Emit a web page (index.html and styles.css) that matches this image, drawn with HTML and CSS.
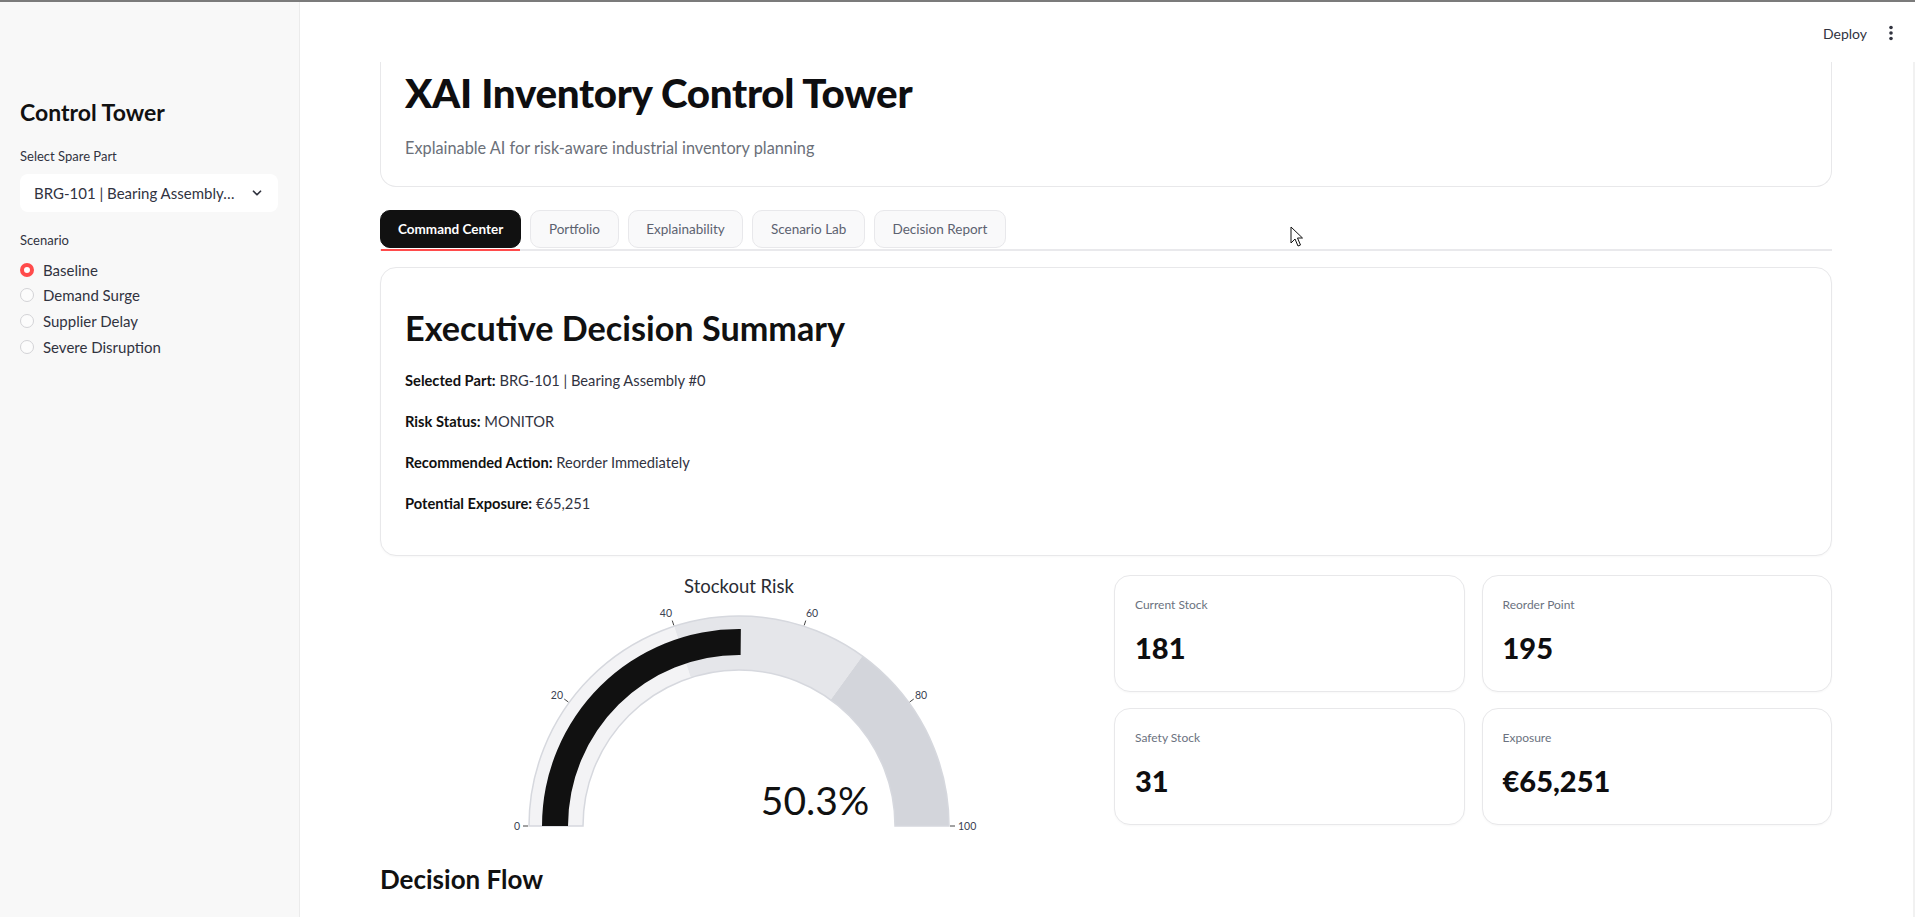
FILE: index.html
```html
<!DOCTYPE html>
<html lang="en">
<head>
<meta charset="utf-8">
<title>XAI Inventory Control Tower</title>
<link rel="stylesheet" href="styles.css">
</head>
<body>
<div class="topline"></div>
<div class="app">
  <aside class="sidebar">
    <h3 class="side-title">Control Tower</h3>
    <label class="field-label">Select Spare Part</label>
    <div class="select">
      <span class="select-value">BRG-101 | Bearing Assembly…</span>
      <svg class="chev" width="14" height="14" viewBox="0 0 24 24"><path d="M6 9l6 6 6-6" fill="none" stroke="#31333f" stroke-width="3" stroke-linecap="round" stroke-linejoin="round"/></svg>
    </div>
    <label class="field-label scenario-label">Scenario</label>
    <div class="radios">
      <div class="radio checked"><span class="dot"></span><span>Baseline</span></div>
      <div class="radio"><span class="dot"></span><span>Demand Surge</span></div>
      <div class="radio"><span class="dot"></span><span>Supplier Delay</span></div>
      <div class="radio"><span class="dot"></span><span>Severe Disruption</span></div>
    </div>
  </aside>

  <main class="main">
    <header class="appbar">
      <span class="deploy">Deploy</span>
      <svg class="kebab" width="6" height="16" viewBox="0 0 6 16"><circle cx="3" cy="2.5" r="1.8" fill="#31333f"/><circle cx="3" cy="8" r="1.8" fill="#31333f"/><circle cx="3" cy="13.5" r="1.8" fill="#31333f"/></svg>
    </header>

    <div class="content">
      <section class="hero">
        <h1 class="hero-title">XAI Inventory Control Tower</h1>
        <p class="hero-sub">Explainable AI for risk-aware industrial inventory planning</p>
      </section>

      <nav class="tabs">
        <button class="tab active">Command Center</button>
        <button class="tab">Portfolio</button>
        <button class="tab">Explainability</button>
        <button class="tab">Scenario Lab</button>
        <button class="tab">Decision Report</button>
      </nav>

      <section class="card summary">
        <h2 class="summary-title">Executive Decision Summary</h2>
        <p><b>Selected Part:</b> BRG-101 | Bearing Assembly #0</p>
        <p><b>Risk Status:</b> MONITOR</p>
        <p><b>Recommended Action:</b> Reorder Immediately</p>
        <p><b>Potential Exposure:</b> €65,251</p>
      </section>

      <div class="risk-row">
        <div class="gauge-wrap">
          <svg class="gauge" width="718" height="272" viewBox="0 0 718 272">
            <text class="g-title" x="359" y="18" text-anchor="middle">Stockout Risk</text>
            <!-- risk bands -->
            <path d="M149 251 A210 210 0 0 1 294.11 51.28 L310.79 102.63 A156 156 0 0 0 203 251 Z" fill="#f3f3f5"/>
            <path d="M294.11 51.28 A210 210 0 0 1 482.44 81.11 L450.70 124.79 A156 156 0 0 0 310.79 102.63 Z" fill="#e5e6ea"/>
            <path d="M482.44 81.11 A210 210 0 0 1 569 251 L515 251 A156 156 0 0 0 450.70 124.79 Z" fill="#d3d5db"/>
            <path d="M149 251 A210 210 0 0 1 569 251 L515 251 A156 156 0 0 0 203 251 Z" fill="none" stroke="#d6d8de" stroke-width="1.5"/>
            <!-- value bar -->
            <path d="M162 251 A197 197 0 0 1 360.86 54.01 L360.61 80.01 A171 171 0 0 0 188 251 Z" fill="#111111"/>
            <!-- ticks -->
            <g stroke="#444" stroke-width="1">
              <line x1="148" y1="251" x2="143" y2="251"/>
              <line x1="188.3" y1="126.98" x2="184.25" y2="124.04"/>
              <line x1="293.8" y1="50.33" x2="292.25" y2="45.57"/>
              <line x1="424.2" y1="50.33" x2="425.75" y2="45.57"/>
              <line x1="529.7" y1="126.98" x2="533.75" y2="124.04"/>
              <line x1="570" y1="251" x2="575" y2="251"/>
            </g>
            <g class="g-tick">
              <text x="140" y="255" text-anchor="end">0</text>
              <text x="183" y="124" text-anchor="end">20</text>
              <text x="292" y="42" text-anchor="end">40</text>
              <text x="426" y="42">60</text>
              <text x="535" y="124">80</text>
              <text x="578" y="255">100</text>
            </g>
            <text class="g-number" x="435" y="240" text-anchor="middle">50.3%</text>
          </svg>
        </div>

        <div class="metrics">
          <div class="card metric"><div class="m-label">Current Stock</div><div class="m-value">181</div></div>
          <div class="card metric"><div class="m-label">Reorder Point</div><div class="m-value">195</div></div>
          <div class="card metric"><div class="m-label">Safety Stock</div><div class="m-value">31</div></div>
          <div class="card metric"><div class="m-label">Exposure</div><div class="m-value">€65,251</div></div>
        </div>
      </div>

      <h3 class="section-title">Decision Flow</h3>
    </div>
  </main>
</div>

<svg class="pointer" width="14" height="22" viewBox="0 0 14 22"><path d="M1 1 L1 17 L5 13 L8 20 L10.5 19 L7.5 12 L12.5 12 Z" fill="#fff" stroke="#111" stroke-width="1" stroke-linejoin="round"/></svg>
</body>
</html>
```

FILE: styles.css
```css
* { box-sizing: border-box; }

html, body {
  margin: 0;
  padding: 0;
}

body {
  width: 1915px;
  height: 917px;
  overflow: hidden;
  background: #ffffff;
  font-family: "Lato", "Noto Sans", sans-serif;
  color: #31333f;
  position: relative;
}

.topline {
  height: 2px;
  background: #7b7b7b;
}

.app {
  display: flex;
  height: 915px;
}

/* ---------- sidebar ---------- */
.sidebar {
  width: 300px;
  flex: none;
  background: #f8f8f8;
  border-right: 1px solid #ebebeb;
  padding: 95px 21px 0 20px;
}

.side-title {
  margin: 0;
  font-size: 23px;
  line-height: 30px;
  font-weight: 700;
  color: #111;
}

.field-label {
  display: block;
  margin-top: 20px;
  font-size: 13px;
  line-height: 18px;
  color: #31333f;
}

.select {
  margin-top: 9px;
  height: 38px;
  background: #ffffff;
  border-radius: 8px;
  display: flex;
  align-items: center;
  justify-content: space-between;
  padding: 0 14px 0 14px;
}

.select-value {
  font-size: 15px;
  color: #31333f;
}

.scenario-label {
  margin-top: 19px;
}

.radios {
  margin-top: 8px;
  display: flex;
  flex-direction: column;
}

.radio {
  display: flex;
  align-items: center;
  gap: 9px;
  height: 25.6px;
  font-size: 15px;
  color: #31333f;
}

.radio .dot {
  width: 14px;
  height: 14px;
  border-radius: 50%;
  border: 1px solid #d3d3d6;
  background: #fcfcfc;
  flex: none;
}

.radio.checked .dot {
  border: 4.5px solid #ff4b4b;
  background: #ffffff;
}

/* ---------- main ---------- */
.main {
  flex: 1;
  display: flex;
  flex-direction: column;
  min-width: 0;
}

.appbar {
  height: 60px;
  flex: none;
  display: flex;
  align-items: center;
  justify-content: flex-end;
  gap: 21px;
  padding-right: 21px;
  padding-top: 2px;
}

.deploy {
  font-size: 14px;
  color: #31333f;
}

.content {
  flex: 1;
  padding: 0 83px 0 80px;
  overflow: hidden;
  box-shadow: inset -2px 0 0 #f1f1f1;
}

.card {
  background: #ffffff;
  border: 1px solid #e8e8ea;
  border-radius: 16px;
  box-shadow: 0 1px 2px rgba(0, 0, 0, 0.03);
}

/* header card, scrolled so its top edge sits under the app bar */
.hero {
  background: #ffffff;
  border: 1px solid #e8e8ea;
  border-top: none;
  border-radius: 0 0 16px 16px;
  height: 125px;
  padding: 5px 24px 0 24px;
}

.hero-title {
  margin: 0;
  font-size: 40.3px;
  line-height: 52px;
  font-weight: 900;
  color: #0e0e10;
  letter-spacing: -0.3px;
}

.hero-sub {
  margin: 18px 0 0 0;
  font-size: 16.3px;
  line-height: 22px;
  color: #6b7079;
}

/* ---------- tabs ---------- */
.tabs {
  margin-top: 23px;
  display: flex;
  gap: 9px;
  padding-bottom: 1px;
  border-bottom: 2px solid #e9e9ec;
}

.tab {
  position: relative;
  height: 38px;
  padding: 0 17.6px;
  border-radius: 10px;
  border: 1px solid #e8e8eb;
  background: #f9f9fa;
  font-family: inherit;
  font-size: 13.5px;
  color: #5c6270;
}

.tab.active {
  background: #111111;
  border-color: #111111;
  color: #ffffff;
  font-weight: 700;
  padding: 0 17px;
}

.tab.active::after {
  content: "";
  position: absolute;
  left: 0;
  right: 0;
  bottom: -4px;
  height: 2px;
  background: #ff4b4b;
}

/* ---------- summary ---------- */
.summary {
  margin-top: 16px;
  height: 289px;
  padding: 38px 24px 0 24px;
}

.summary-title {
  margin: 0 0 19px 0;
  font-size: 34.2px;
  line-height: 43px;
  font-weight: 700;
  color: #111;
}

.summary p {
  margin: 0 0 17px 0;
  font-size: 14.7px;
  line-height: 24px;
  color: #31333f;
}

.summary p b {
  color: #111;
  font-weight: 700;
}

/* ---------- risk row ---------- */
.risk-row {
  margin-top: 19px;
  display: grid;
  grid-template-columns: 1fr 1fr;
  gap: 16px;
}

.gauge {
  display: block;
  overflow: visible;
  font-family: "Lato", "Noto Sans", sans-serif;
}

.g-title {
  font-size: 18.5px;
  fill: #2a2c33;
}

.g-tick text {
  font-size: 10.5px;
  fill: #3b4252;
}

.g-number {
  font-size: 39px;
  fill: #111;
}

.metrics {
  display: grid;
  grid-template-columns: 1fr 1fr;
  grid-auto-rows: 117px;
  gap: 16px 17px;
  align-content: start;
}

.metric {
  padding: 21px 20px 0 20px;
}

.m-label {
  font-size: 12px;
  line-height: 16px;
  color: #6b7280;
}

.m-value {
  margin-top: 17px;
  font-size: 29px;
  line-height: 36px;
  font-weight: 900;
  color: #0e0e10;
}

.section-title {
  margin: 16px 0 0 0;
  font-size: 26px;
  line-height: 32px;
  font-weight: 700;
  color: #111;
}

/* mouse pointer resting over the page */
.pointer {
  position: absolute;
  left: 1290px;
  top: 226px;
}
```
